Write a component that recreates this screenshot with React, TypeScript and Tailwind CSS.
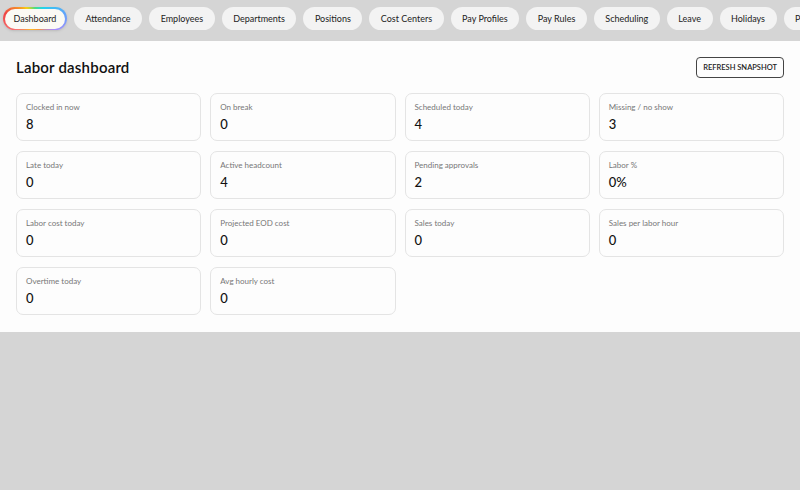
import React from 'react';

const tabs = [
  'Dashboard',
  'Attendance',
  'Employees',
  'Departments',
  'Positions',
  'Cost Centers',
  'Pay Profiles',
  'Pay Rules',
  'Scheduling',
  'Leave',
  'Holidays',
  'Payroll',
];

const stats: { label: string; value: string }[] = [
  { label: 'Clocked in now', value: '8' },
  { label: 'On break', value: '0' },
  { label: 'Scheduled today', value: '4' },
  { label: 'Missing / no show', value: '3' },
  { label: 'Late today', value: '0' },
  { label: 'Active headcount', value: '4' },
  { label: 'Pending approvals', value: '2' },
  { label: 'Labor %', value: '0%' },
  { label: 'Labor cost today', value: '0' },
  { label: 'Projected EOD cost', value: '0' },
  { label: 'Sales today', value: '0' },
  { label: 'Sales per labor hour', value: '0' },
  { label: 'Overtime today', value: '0' },
  { label: 'Avg hourly cost', value: '0' },
];

const StatCard: React.FC<{ label: string; value: string }> = ({ label, value }) => (
  <div className="h-[48px] rounded-[7px] border border-[#e4e4e4] bg-[#fdfdfd] px-[9px] pt-[8px]">
    <div className="text-[8px] leading-[10px] text-[#777]">{label}</div>
    <div className="mt-[4px] text-[13px] leading-[16px] font-medium text-[#111]">{value}</div>
  </div>
);

export default function App() {
  return (
    <div className="min-h-[490px] bg-[#d5d5d5] font-['Lato',sans-serif]">
      {/* tab strip */}
      <div className="flex h-[41px] items-start gap-[7px] overflow-hidden whitespace-nowrap pt-[7px] pl-[3px]">
        {tabs.map((t, i) =>
          i === 0 ? (
            <div
              key={t}
              className="shrink-0 rounded-full bg-[conic-gradient(from_200deg,#fbbf24,#f87171,#ef4444,#facc15,#4ade80,#22d3ee,#60a5fa,#a78bfa,#fb923c,#fbbf24)] p-[1.5px] shadow-sm"
            >
              <div className="flex h-[20px] items-center rounded-full bg-[#fbfaf4] px-[9px] text-[9px] text-[#222]">
                {t}
              </div>
            </div>
          ) : (
            <div
              key={t}
              className="flex h-[23px] shrink-0 items-center rounded-full bg-[#f3f3f3] px-[11.5px] text-[9px] text-[#222]"
            >
              {t}
            </div>
          )
        )}
      </div>

      {/* panel */}
      <div className="bg-[#fdfdfd] px-4 pt-[15px] pb-[17px]">
        <div className="flex items-center justify-between">
          <h1 className="text-[15px] font-semibold tracking-[0.2px] text-[#111]">Labor dashboard</h1>
          <button className="h-[21px] rounded-[4px] border border-[#444] px-[6px] text-[7.5px] font-semibold text-[#222]">
            REFRESH SNAPSHOT
          </button>
        </div>
        <div className="mt-[14px] grid grid-cols-4 gap-x-[9px] gap-y-[10px]">
          {stats.map((s) => (
            <StatCard key={s.label} label={s.label} value={s.value} />
          ))}
        </div>
      </div>
    </div>
  );
}
